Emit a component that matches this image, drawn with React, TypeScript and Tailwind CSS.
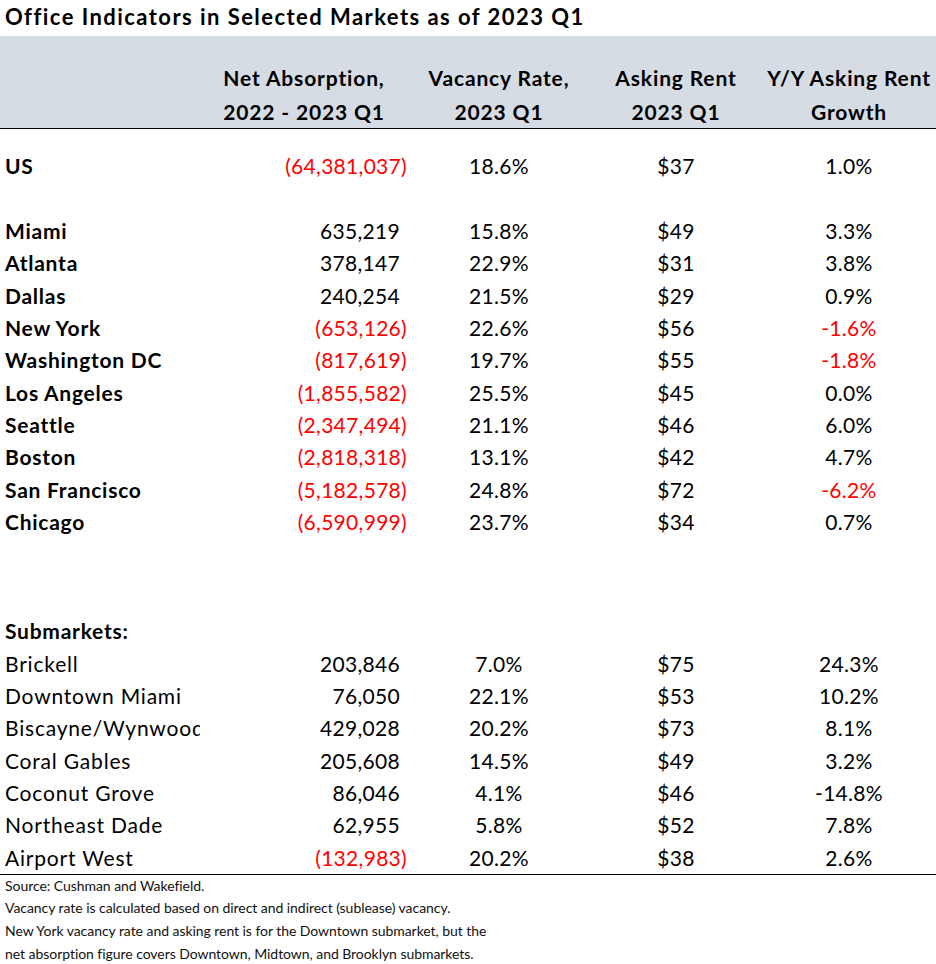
import React from 'react';

type Row = {
  name: string;
  net: number;
  vacancy: string;
  rent: string;
  growth: string;
};

const markets: Row[] = [
  { name: 'Miami', net: 635219, vacancy: '15.8%', rent: '$49', growth: '3.3%' },
  { name: 'Atlanta', net: 378147, vacancy: '22.9%', rent: '$31', growth: '3.8%' },
  { name: 'Dallas', net: 240254, vacancy: '21.5%', rent: '$29', growth: '0.9%' },
  { name: 'New York', net: -653126, vacancy: '22.6%', rent: '$56', growth: '-1.6%' },
  { name: 'Washington DC', net: -817619, vacancy: '19.7%', rent: '$55', growth: '-1.8%' },
  { name: 'Los Angeles', net: -1855582, vacancy: '25.5%', rent: '$45', growth: '0.0%' },
  { name: 'Seattle', net: -2347494, vacancy: '21.1%', rent: '$46', growth: '6.0%' },
  { name: 'Boston', net: -2818318, vacancy: '13.1%', rent: '$42', growth: '4.7%' },
  { name: 'San Francisco', net: -5182578, vacancy: '24.8%', rent: '$72', growth: '-6.2%' },
  { name: 'Chicago', net: -6590999, vacancy: '23.7%', rent: '$34', growth: '0.7%' },
];

const submarkets: Row[] = [
  { name: 'Brickell', net: 203846, vacancy: '7.0%', rent: '$75', growth: '24.3%' },
  { name: 'Downtown Miami', net: 76050, vacancy: '22.1%', rent: '$53', growth: '10.2%' },
  { name: 'Biscayne/Wynwood', net: 429028, vacancy: '20.2%', rent: '$73', growth: '8.1%' },
  { name: 'Coral Gables', net: 205608, vacancy: '14.5%', rent: '$49', growth: '3.2%' },
  { name: 'Coconut Grove', net: 86046, vacancy: '4.1%', rent: '$46', growth: '-14.8%' },
  { name: 'Northeast Dade', net: 62955, vacancy: '5.8%', rent: '$52', growth: '7.8%' },
  { name: 'Airport West', net: -132983, vacancy: '20.2%', rent: '$38', growth: '2.6%' },
];

const fmt = (n: number) => Math.abs(n).toLocaleString('en-US');

const DataRow = ({ row, bold }: { row: Row; bold?: boolean }) => {
  const neg = row.net < 0;
  const growthNeg = row.growth.startsWith('-') && bold;
  return (
    <div className="flex h-[32.33px] items-center tracking-[0.3px]">
      <div
        className={`w-[200px] shrink-0 whitespace-nowrap overflow-hidden pl-[5px] ${
          bold ? 'font-bold tracking-[0.75px]' : 'tracking-[0.8px]'
        }`}
      >
        {row.name}
      </div>
      <div className={`w-[208px] text-right ${neg ? 'pr-[1px] text-[#ff0000]' : 'pr-[8px]'}`}>
        {neg ? `(${fmt(row.net)})` : fmt(row.net)}
      </div>
      <div className="w-[182px] text-center">{row.vacancy}</div>
      <div className="w-[172px] text-center">{row.rent}</div>
      <div className={`w-[174px] text-center ${growthNeg ? 'text-[#ff0000]' : ''}`}>{row.growth}</div>
    </div>
  );
};

const App: React.FC = () => {
  return (
    <div className="w-[936px] h-[964px] bg-white text-black font-['Lato',sans-serif] text-[21px] overflow-hidden">
      {/* Title */}
      <div className="h-[36px] flex items-center pl-[5px] pb-[3px] font-bold text-[22px] tracking-[1.45px] whitespace-nowrap">
        Office Indicators in Selected Markets as of 2023 Q1
      </div>

      {/* Header band */}
      <div className="h-[93px] bg-[#d6dce4] border-b-[1.5px] border-black font-bold flex pt-[25px] tracking-[0.85px]">
        <div className="w-[200px] shrink-0" />
        {[
          ['Net Absorption,', '2022 - 2023 Q1', 'w-[208px]'],
          ['Vacancy Rate,', '2023 Q1', 'w-[182px]'],
          ['Asking Rent', '2023 Q1', 'w-[172px]'],
          ['Y/Y Asking Rent', 'Growth', 'w-[174px]'],
        ].map(([a, b, w]) => (
          <div key={a} className={`${w} flex flex-col items-center leading-[34px] whitespace-nowrap`}>
            <span>{a}</span>
            <span>{b}</span>
          </div>
        ))}
      </div>

      {/* US */}
      <div className="pt-[21px]">
        <DataRow row={{ name: 'US', net: -64381037, vacancy: '18.6%', rent: '$37', growth: '1.0%' }} bold />
      </div>
      <div className="h-[32.33px]" />

      {/* Markets */}
      {markets.map((m) => (
        <DataRow key={m.name} row={m} bold />
      ))}

      {/* Submarkets */}
      <div className="h-[77px]" />
      <div className="h-[32.33px] flex items-center pl-[5px] font-bold tracking-[0.75px]">Submarkets:</div>
      <div className="border-b-[1.5px] border-black">
        {submarkets.map((s) => (
          <DataRow key={s.name} row={s} />
        ))}
      </div>

      {/* Footnotes */}
      <div className="pl-[5px] text-[14px] leading-[22.7px] text-[#111] tracking-[-0.05px]">
        <p>Source: Cushman and Wakefield.</p>
        <p>Vacancy rate is calculated based on direct and indirect (sublease) vacancy.</p>
        <p>New York vacancy rate and asking rent is for the Downtown submarket, but the</p>
        <p>net absorption figure covers Downtown, Midtown, and Brooklyn submarkets.</p>
      </div>
    </div>
  );
};

export default App;
